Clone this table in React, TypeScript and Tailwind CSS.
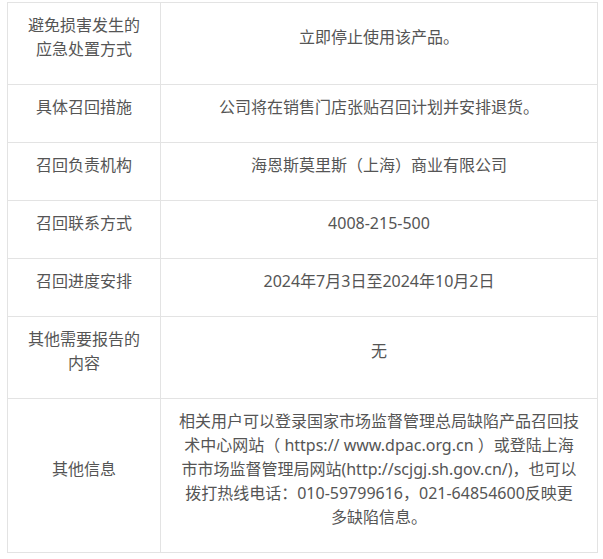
import type { ReactNode } from "react";

const rows: { label: ReactNode; value: ReactNode }[] = [
  { label: "避免损害发生的应急处置方式", value: "立即停止使用该产品。" },
  { label: "具体召回措施", value: "公司将在销售门店张贴召回计划并安排退货。" },
  { label: "召回负责机构", value: "海恩斯莫里斯（上海）商业有限公司" },
  { label: "召回联系方式", value: "4008-215-500" },
  { label: "召回进度安排", value: "2024年7月3日至2024年10月2日" },
  { label: "其他需要报告的内容", value: "无" },
  {
    label: "其他信息",
    value: (
      <>
        相关用户可以登录国家市场监督管理总局缺陷产品召回技
        <br />
        术中心网站（ https:// www.dpac.org.cn ）或登陆上海
        <br />
        市市场监督管理局网站(http://scjgj.sh.gov.cn/)，也可以
        <br />
        拨打热线电话：010-59799616，021-64854600反映更
        <br />
        多缺陷信息。
      </>
    ),
  },
];

export default function App() {
  return (
    <div
      className="min-h-[559px] w-[603px] bg-white pl-[7px] pt-[2px]"
      style={{ fontFamily: "'Noto Sans', 'Noto Sans CJK SC', sans-serif" }}
    >
      <table className="w-[590px] table-fixed border-collapse text-[16px] leading-[24px] text-[#555]">
        <colgroup>
          <col className="w-[153px]" />
          <col className="w-[437px]" />
        </colgroup>
        <tbody>
          {rows.map((row, i) => (
            <tr key={i}>
              <td className="border border-[#e3e3e3] px-[15px] pt-[10px] pb-[23px] text-center align-middle">
                {row.label}
              </td>
              <td className="border border-[#e3e3e3] px-[12px] pt-[10px] pb-[23px] text-center align-middle">
                {row.value}
              </td>
            </tr>
          ))}
        </tbody>
      </table>
    </div>
  );
}
